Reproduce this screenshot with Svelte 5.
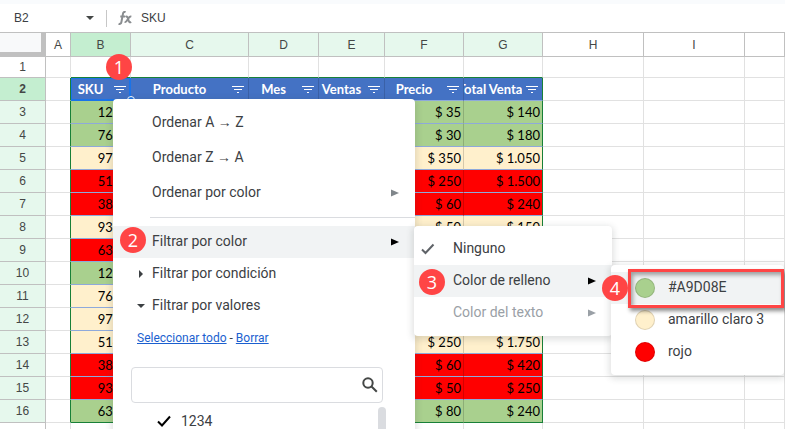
<script>
  const columns = [
    { id: 'A' }, { id: 'B', state: 'current' }, { id: 'C', state: 'ranged' }, { id: 'D', state: 'ranged' },
    { id: 'E', state: 'ranged' }, { id: 'F', state: 'ranged' }, { id: 'G', state: 'ranged' },
    { id: 'H' }, { id: 'I' }, { id: '' }
  ];
  const titles = ['SKU', 'Producto', 'Mes', 'Ventas', 'Precio', 'Total Ventas'];
  const rows = [
    ['green', '1234', '$ 35', '$ 140'],
    ['green', '7654', '$ 30', '$ 180'],
    ['cream', '9786', '$ 350', '$ 1.050'],
    ['red', '5142', '$ 250', '$ 1.500'],
    ['red', '3865', '$ 60', '$ 240'],
    ['cream', '9345', '$ 50', '$ 150'],
    ['red', '6321', '', ''],
    ['green', '1234', '', ''],
    ['cream', '7654', '', ''],
    ['cream', '9786', '', ''],
    ['cream', '5142', '$ 250', '$ 1.750'],
    ['red', '3865', '$ 60', '$ 420'],
    ['red', '9345', '$ 50', '$ 250'],
    ['green', '6321', '$ 80', '$ 240']
  ];
  const fills = [
    { name: '#A9D08E', tone: 'green' },
    { name: 'amarillo claro 3', tone: 'cream' },
    { name: 'rojo', tone: 'red' }
  ];
</script>

{#snippet arrow()}
  <svg class="arrow" width="8" height="8" viewBox="0 0 8 8" aria-hidden="true"><path d="M0 .5l8 3.500-8 3.500z" /></svg>
{/snippet}

<main class="app">
  <header class="bar">
    <input class="namebox" aria-label="Cuadro de nombres" value="B2" />
    <svg width="8" height="4" viewBox="0 0 8 4" aria-hidden="true"><path d="M0 0h8L4 4z" fill="#444746" /></svg>
    <span class="rule"></span>
    <svg class="fx" width="14" height="14" viewBox="0 0 14 14" aria-hidden="true">
      <path d="M7.6 1.2C6.3.5 5.3 1 5 2.6L3.4 11c-.3 1.700-1.300 2.300-2.800 1.700M2.300 5.400h4.700M7.500 5.800c1.200-.8 1.800-.2 2.300 1.200l1 3c.5 1.400 1.200 1.700 2.300.9M13.300 5.700c-1.200-.4-2 .4-2.900 1.700L8.800 9.700c-.7 1-1.300 1.500-2.200 1.200" />
    </svg>
    <input class="formula" aria-label="Barra de fórmulas" value="SKU" />
  </header>

  <table>
    <colgroup>
      <col class="w-row" /><col class="w-a" /><col class="w-b" /><col class="w-c" /><col class="w-d" /><col class="w-e" />
      <col class="w-f" /><col class="w-f" /><col class="w-h" /><col class="w-h" /><col />
    </colgroup>
    <thead>
      <tr>
        <th class="corner"></th>
        {#each columns as c}<th class={c.state}>{c.id}</th>{/each}
      </tr>
    </thead>
    <tbody>
      <tr class="first">
        <th>1</th>
        <td></td>
        {#each titles as _}<td class="edge-bottom"></td>{/each}
        <td></td><td></td><td></td>
      </tr>
      <tr>
        <th class="current">2</th>
        <td class="edge-right"></td>
        {#each titles as title, i}
          <td class="title" class:active={i === 0} class:edge-right={i === 5}>
            <div class="title-box">
              <span>{title}</span>
              <svg width="12" height="7" viewBox="0 0 12 7" aria-hidden="true"><path d="M0 .5h12M2 3.500h8M5 6.500h2" stroke="#fff" /></svg>
            </div>
          </td>
        {/each}
        <td></td><td></td><td></td>
      </tr>
      {#each rows as [tone, sku, price, total], i}
        <tr class:last={i === rows.length - 1}>
          <th class="ranged">{i + 3}</th>
          <td class="edge-right"></td>
          <td class="data {tone}">{sku}</td>
          <td class="data {tone}"></td>
          <td class="data {tone}"></td>
          <td class="data {tone}"></td>
          <td class="data {tone}">{price}</td>
          <td class="data edge-right {tone}">{total}</td>
          <td></td><td></td><td></td>
        </tr>
      {/each}
      <tr>
        <th>17</th>
        {#each columns as _}<td></td>{/each}
      </tr>
    </tbody>
  </table>

  <span class="handle"></span>

  <div class="menu filter">
    <button class="sort">Ordenar A → Z</button>
    <button class="sort">Ordenar Z → A</button>
    <button class="sort">Ordenar por color <span class="dim">{@render arrow()}</span></button>
    <hr />
    <button class="on">Filtrar por color {@render arrow()}</button>
    <button>
      <svg class="fold" width="8" height="8" viewBox="0 0 8 8" aria-hidden="true"><path d="M2 0l4 4-4 4z" /></svg>
      Filtrar por condición
    </button>
    <button>
      <svg class="fold" width="8" height="8" viewBox="0 0 8 8" aria-hidden="true"><path d="M0 2h8L4 6z" /></svg>
      Filtrar por valores
    </button>
    <p class="links"><a href="#todo">Seleccionar todo</a> - <a href="#borrar">Borrar</a></p>
    <div class="search">
      <input type="search" aria-label="Buscar valores" />
      <svg width="16" height="16" viewBox="0 0 16 16" aria-hidden="true">
        <circle cx="6" cy="6" r="4.700" /><path d="M9.500 9.500l5.300 5.300" />
      </svg>
    </div>
    <div class="values">
      <label>
        <input type="checkbox" checked />
        <svg width="14" height="12" viewBox="0 0 14 12" aria-hidden="true"><path d="M1 6.500l4 4L13 1.500" /></svg>
        1234
      </label>
      <span class="thumb"></span>
    </div>
  </div>

  <div class="menu kinds">
    <button>
      <svg class="tick" width="14" height="12" viewBox="0 0 14 12" aria-hidden="true"><path d="M1 6.500l3.500 3.500L12.500 1.500" /></svg>
      Ninguno
    </button>
    <button class="on">Color de relleno {@render arrow()}</button>
    <button disabled>Color del texto {@render arrow()}</button>
  </div>

  <div class="menu colors">
    {#each fills as f, i}
      <button class:on={i === 0}><span class="swatch {f.tone}"></span>{f.name}</button>
    {/each}
    <span class="frame"></span>
  </div>

  <span class="badge one">1</span>
  <span class="badge two">2</span>
  <span class="badge three">3</span>
  <span class="badge four">4</span>
</main>

<style>
  :global(body) { margin: 0; background: #fff; }
  .app {
    position: relative;
    height: 100vh;
    overflow: hidden;
    font-family: Roboto, "Liberation Sans", sans-serif;
    color: #3c4043;
  }
  .app * { box-sizing: border-box; }
  input, button { font: inherit; color: inherit; border: 0; background: none; padding: 0; margin: 0; outline: 0; }

  .bar {
    display: flex;
    align-items: center;
    height: 32px;
    padding: 2px 0 0 14px;
    border-top: 4px solid #f9fbfd;
    font-family: "Liberation Sans", Arial, sans-serif;
    font-size: 12px;
  }
  .bar input, .bar svg, .rule { margin-bottom: 2px; }
  .namebox { width: 72px; }
  .formula { flex: 1; min-width: 0; }
  .rule { width: 1px; height: 17px; background: #c7c7c7; margin-left: 12px; margin-right: 11px; }
  .fx { fill: none; stroke: #8a8d90; stroke-width: 2; }
  .bar .fx { margin-right: 9px; }

  table { width: 100%; table-layout: fixed; border-collapse: separate; border-spacing: 0; }
  .w-row { width: 46px; } .w-a { width: 25px; } .w-b { width: 60px; } .w-c { width: 118px; }
  .w-d { width: 70px; } .w-e { width: 66px; } .w-f { width: 79px; } .w-h { width: 101px; }
  th, td { padding: 0; height: 23px; line-height: 16px; border-right: 1px solid #e1e1e1; border-bottom: 1px solid #e1e1e1; }
  th { font-family: "Liberation Sans", Arial, sans-serif; font-size: 12px; font-weight: 400; color: #444746; border-color: #c0c0c0; }
  thead th { height: 25px; border-top: 1px solid #c0c0c0; }
  thead th.corner { background: #f8f9fa; border-right: 5px solid #c0c0c0; border-bottom: 5px solid #c0c0c0; }
  .first th, .first td { height: 21px; }
  th.ranged { background: #e6f8ed; }
  th.current { background: #c4eed0; }
  tbody th.current { font-weight: 700; }
  .data, .title { font-family: Lato, Carlito, sans-serif; font-size: 13px; color: #000; }
  .data { text-align: right; padding-right: 2px; border-bottom-color: #8ea9db; border-right-color: rgba(0, 0, 0, 0.16); }
  .title { background: #4472c4; color: #fff; font-weight: 700; border-bottom-color: #8ea9db; border-right-color: #3a61a7; }
  .title-box { display: flex; align-items: center; height: 22px; padding-right: 4px; }
  .title-box span { flex: 1; min-width: 0; display: flex; justify-content: center; overflow: hidden; white-space: nowrap; }
  .title-box svg { flex: none; margin-left: 4px; }
  .active { box-shadow: inset 0 0 0 1px #1a73e8; border-color: #1a73e8; }
  td.edge-right { border-right-color: #188038; }
  td.edge-bottom, .last .data { border-bottom-color: #188038; }
  .green { background-color: #a9d08e; }
  .cream { background-color: #fff0cc; }
  .red { background-color: #f00; }

  .handle { position: absolute; left: 127px; top: 96px; width: 8px; height: 8px; border-radius: 50%; background: #1a73e8; border: 1px solid #fff; }

  .menu { position: absolute; background: #fff; border-radius: 4px; box-shadow: 0 2px 6px 2px rgba(60, 64, 67, 0.15); font-size: 14px; }
  .menu button { position: relative; display: flex; align-items: center; width: 100%; height: 32px; padding-bottom: 2px; text-align: left; white-space: nowrap; }
  .menu .on { background: #f1f3f4; }
  .arrow { position: absolute; right: 16px; top: 12px; fill: #000; }
  .filter { left: 113px; top: 99px; width: 302px; height: 360px; padding-top: 6px; }
  .filter button { padding-left: 39px; }
  .filter .sort { height: 35px; }
  .sort .arrow { top: 14px; }
  .dim .arrow { fill: #80868b; }
  .fold { position: absolute; left: 24px; top: 12px; fill: #3c4043; }
  hr { height: 1px; border: 0; background: #dadce0; margin: 7px 0 8px 37px; }
  .links { margin: 8px 24px 0; font-size: 12px; line-height: 17px; }
  .links a { color: #1b5fcf; text-decoration: underline; }
  .search { display: flex; align-items: center; margin: 20px 32px 0 18px; height: 36px; border: 1px solid #dadce0; border-radius: 4px; padding: 0 4px 0 8px; }
  .search input { flex: 1; min-width: 0; height: 100%; appearance: none; }
  .search svg { fill: none; stroke: #444746; stroke-width: 2; }
  .values { display: flex; justify-content: space-between; margin: 4px 29px 0 44px; height: 48px; }
  .values label { position: relative; display: flex; align-items: center; gap: 10px; height: 28px; }
  .values input { position: absolute; width: 14px; height: 14px; appearance: none; }
  .values svg { fill: none; stroke: #000; stroke-width: 2; }
  .thumb { width: 8px; border-radius: 4px; background: #dadce0; }

  .kinds { left: 414px; top: 226px; width: 198px; padding: 7px 0; }
  .kinds button { padding-left: 39px; }
  .kinds button:disabled { color: #9aa0a6; }
  .kinds button:disabled .arrow { fill: #9aa0a6; }
  .tick { position: absolute; left: 7px; top: 10px; fill: none; stroke: #5f6368; stroke-width: 2; }

  .colors { left: 611px; top: 265px; width: 173px; padding: 7px 0; }
  .colors button { padding-left: 24px; gap: 13px; }
  .swatch { width: 20px; height: 20px; margin-top: 2px; border-radius: 50%; border: 1px solid rgba(0, 0, 0, 0.12); }
  .frame { position: absolute; left: 17px; top: 4px; right: 0; height: 39px; border: 3px solid #ff4545; box-shadow: 2px 3px 4px rgba(0, 0, 0, 0.45), inset 2px 3px 4px rgba(0, 0, 0, 0.35); }

  .badge {
    position: absolute; width: 26px; height: 26px; border-radius: 50%; background: #ff4545; color: #fff;
    font: 500 18px/26px "Open Sans", "Noto Sans", sans-serif; text-align: center;
  }
  .one { left: 106px; top: 54px; }
  .two { left: 120px; top: 227px; }
  .three { left: 419px; top: 269px; }
  .four { left: 602px; top: 275px; }
</style>
